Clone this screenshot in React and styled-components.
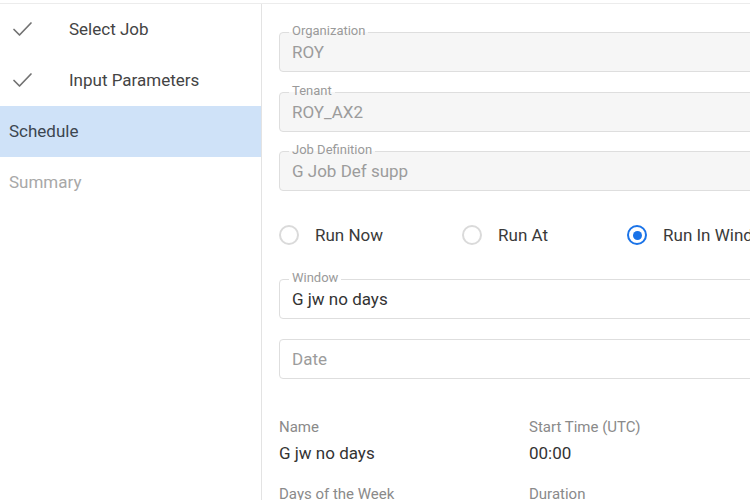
import React from 'react';
import styled, { createGlobalStyle } from 'styled-components';

const GlobalStyle = createGlobalStyle`
  html, body {
    margin: 0;
    padding: 0;
    background: #fff;
    overflow: hidden;
    font-family: Roboto, "Liberation Sans", sans-serif;
  }
  * { box-sizing: border-box; }
`;

const steps = [
  { label: 'Select Job', state: 'done' },
  { label: 'Input Parameters', state: 'done' },
  { label: 'Schedule', state: 'active' },
  { label: 'Summary', state: 'todo' },
];

const CheckIcon = () => (
  <svg width="22" height="22" viewBox="0 0 22 22" fill="none">
    <polyline
      points="3,11.5 8.5,17 20,5"
      stroke="#727272"
      strokeWidth="1.7"
      strokeLinecap="round"
      strokeLinejoin="round"
    />
  </svg>
);

const App = () => (
  <>
    <GlobalStyle />
    <Page>
      <Sidebar>
        {steps.map((s) => (
          <Step key={s.label} state={s.state}>
            {s.state === 'done' && (
              <IconSlot>
                <CheckIcon />
              </IconSlot>
            )}
            {s.label}
          </Step>
        ))}
      </Sidebar>
      <Main>
        <Field disabled>
          <FloatLabel disabled>Organization</FloatLabel>
          ROY
        </Field>
        <Field disabled>
          <FloatLabel disabled>Tenant</FloatLabel>
          ROY_AX2
        </Field>
        <Field disabled>
          <FloatLabel disabled>Job Definition</FloatLabel>
          G Job Def supp
        </Field>

        <RadioRow>
          <RadioOption>
            <RadioCircle />
            Run Now
          </RadioOption>
          <RadioOption>
            <RadioCircle />
            Run At
          </RadioOption>
          <RadioOption>
            <RadioCircle checked />
            Run In Window
          </RadioOption>
        </RadioRow>

        <Field>
          <FloatLabel>Window</FloatLabel>
          G jw no days
        </Field>
        <Field placeholder>Date</Field>

        <InfoGrid>
          <Info>
            <InfoLabel>Name</InfoLabel>
            <InfoValue>G jw no days</InfoValue>
          </Info>
          <Info>
            <InfoLabel>Start Time (UTC)</InfoLabel>
            <InfoValue>00:00</InfoValue>
          </Info>
          <Info>
            <InfoLabel>Days of the Week</InfoLabel>
            <InfoValue>&nbsp;</InfoValue>
          </Info>
          <Info>
            <InfoLabel>Duration</InfoLabel>
            <InfoValue>&nbsp;</InfoValue>
          </Info>
        </InfoGrid>
      </Main>
    </Page>
  </>
);

export default App;

const Page = styled.div`
  display: flex;
  height: 500px;
  width: 750px;
  margin-top: 3px;
  border-top: 1px solid #ececec;
  overflow: hidden;
`;

const Sidebar = styled.nav`
  width: 262px;
  flex-shrink: 0;
  border-right: 1px solid #e3e3e3;
  display: flex;
  flex-direction: column;
`;

const Step = styled.div`
  height: 51px;
  flex-shrink: 0;
  display: flex;
  align-items: center;
  padding-left: ${({ state }) => (state === 'done' ? '11px' : '9px')};
  padding-bottom: 1px;
  font-size: 17px;
  color: ${({ state }) =>
    state === 'todo' ? '#a8a8a8' : state === 'active' ? '#3c4650' : '#444'};
  background: ${({ state }) => (state === 'active' ? '#cfe2f8' : 'transparent')};
`;

const IconSlot = styled.span`
  width: 58px;
  display: flex;
  align-items: center;
`;

const Main = styled.main`
  flex-shrink: 0;
  width: 700px;
  padding: 28px 0 0 17px;
  display: flex;
  flex-direction: column;

  & > * {
    flex-shrink: 0;
  }
`;

const Field = styled.div`
  position: relative;
  height: 40px;
  margin-bottom: 19.5px;
  padding: 0 12px;
  display: flex;
  align-items: center;
  border: 1px solid #dedede;
  border-radius: 4px;
  font-size: 17px;
  background: ${({ disabled }) => (disabled ? '#f6f6f6' : '#fff')};
  color: ${({ disabled, placeholder }) =>
    disabled || placeholder ? '#9c9c9c' : '#333'};
`;

const FloatLabel = styled.span`
  position: absolute;
  top: -10px;
  left: 9px;
  padding: 0 3px;
  font-size: 13px;
  line-height: 15px;
  color: #9a9a9a;
  background: linear-gradient(
    #fff 0 9px,
    ${({ disabled }) => (disabled ? '#f6f6f6' : '#fff')} 9px 100%
  );
`;

const RadioRow = styled.div`
  display: flex;
  align-items: center;
  gap: 79px;
  height: 49px;
  margin-bottom: 19.5px;
`;

const RadioOption = styled.label`
  display: flex;
  align-items: center;
  gap: 16px;
  font-size: 17px;
  color: #3a3a3a;
  white-space: nowrap;
`;

const RadioCircle = styled.span`
  width: 20px;
  height: 20px;
  border-radius: 50%;
  border: 2px solid ${({ checked }) => (checked ? '#1a73e8' : '#dadada')};
  display: flex;
  align-items: center;
  justify-content: center;

  &::after {
    content: '';
    width: 9px;
    height: 9px;
    border-radius: 50%;
    background: ${({ checked }) => (checked ? '#1a73e8' : 'transparent')};
  }
`;

const InfoGrid = styled.div`
  display: grid;
  grid-template-columns: 250px 250px;
  row-gap: 22px;
  margin-top: 19.5px;
`;

const Info = styled.div`
  display: flex;
  flex-direction: column;
  gap: 7px;
`;

const InfoLabel = styled.div`
  font-size: 15px;
  line-height: 18px;
  color: #8a8a8a;
`;

const InfoValue = styled.div`
  font-size: 17px;
  line-height: 20px;
  color: #333;
`;
